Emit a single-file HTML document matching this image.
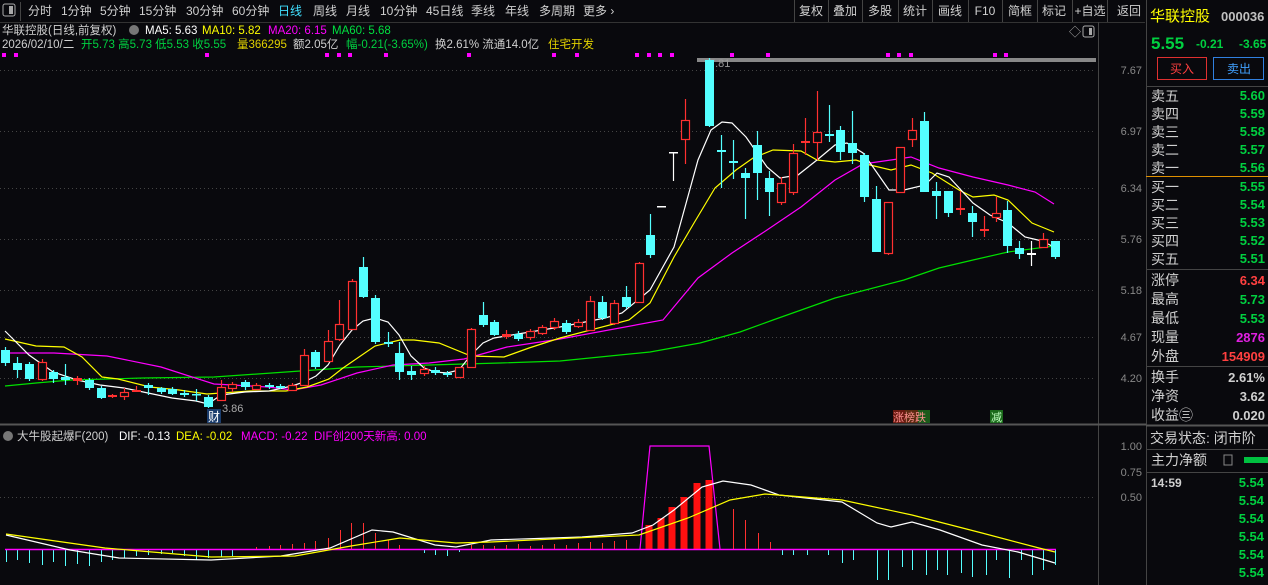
<!DOCTYPE html>
<html><head><meta charset="utf-8"><style>
html,body{margin:0;padding:0;background:#09090d;width:1268px;height:585px;overflow:hidden}
svg{display:block}
text{font-family:"Liberation Sans","Noto Sans CJK SC",sans-serif}
</style></head><body>
<svg id="s" width="1268" height="585" xmlns="http://www.w3.org/2000/svg">
<rect width="1268" height="585" fill="#09090d"/>
<!-- top nav -->
<line x1="0" y1="22.5" x2="1145" y2="22.5" stroke="#333"/>
<rect x="3" y="4" width="12" height="12" fill="none" stroke="#aaa" rx="2"/><rect x="9" y="6" width="4" height="8" fill="#aaa"/>
<line x1="20.5" y1="2" x2="20.5" y2="21" stroke="#444"/>
<g font-size="12" fill="#d0d0d0">
<text x="28" y="15">分时</text><text x="61" y="15">1分钟</text><text x="100" y="15">5分钟</text><text x="139" y="15">15分钟</text><text x="186" y="15">30分钟</text><text x="232" y="15">60分钟</text><text x="278" y="15" fill="#40e0ff">日线</text><text x="313" y="15">周线</text><text x="346" y="15">月线</text><text x="380" y="15">10分钟</text><text x="426" y="15">45日线</text><text x="471" y="15">季线</text><text x="505" y="15">年线</text><text x="539" y="15">多周期</text><text x="583" y="15">更多 ›</text>
</g>
<g stroke="#444"><line x1="794.5" y1="0" x2="794.5" y2="22"/><line x1="828.5" y1="0" x2="828.5" y2="22"/><line x1="862.5" y1="0" x2="862.5" y2="22"/><line x1="898.5" y1="0" x2="898.5" y2="22"/><line x1="932.5" y1="0" x2="932.5" y2="22"/><line x1="968.5" y1="0" x2="968.5" y2="22"/><line x1="1002.5" y1="0" x2="1002.5" y2="22"/><line x1="1037.5" y1="0" x2="1037.5" y2="22"/><line x1="1072.5" y1="0" x2="1072.5" y2="22"/><line x1="1107.5" y1="0" x2="1107.5" y2="22"/></g>
<g font-size="12" fill="#d0d0d0" text-anchor="middle">
<text x="811" y="15">复权</text><text x="845" y="15">叠加</text><text x="880" y="15">多股</text><text x="915" y="15">统计</text><text x="950" y="15">画线</text><text x="985" y="15">F10</text><text x="1020" y="15">简框</text><text x="1054" y="15">标记</text><text x="1090" y="15">+自选</text><text x="1129" y="15">返回</text>
</g>
<!-- info lines -->
<g font-size="11.5">
<text x="2" y="34" fill="#d0d0d0">华联控股(日线,前复权)</text>
<circle cx="134" cy="30" r="5" fill="#777"/>
<text x="145" y="34" fill="#fff">MA5: 5.63</text><text x="202" y="34" fill="#ffff00">MA10: 5.82</text><text x="268" y="34" fill="#ff00ff">MA20: 6.15</text><text x="332" y="34" fill="#00e040">MA60: 5.68</text>
<text x="2" y="48" fill="#d0d0d0">2026/02/10/二</text>
<text x="81" y="48" fill="#00d040">开5.73 高5.73 低5.53 收5.55</text>
<text x="237" y="48" fill="#e0d000">量366295</text>
<text x="293" y="48" fill="#d0d0d0">额2.05亿</text>
<text x="346" y="48" fill="#00d040">幅-0.21(-3.65%)</text>
<text x="435" y="48" fill="#d0d0d0">换2.61% 流通14.0亿</text>
<text x="548" y="48" fill="#e0d000">住宅开发</text>
</g>
<text x="1069" y="36" font-size="12" fill="#aaa">◇</text>
<rect x="1083" y="26" width="11" height="11" fill="none" stroke="#aaa" rx="2"/><rect x="1089" y="28" width="3" height="7" fill="#aaa"/>
<!-- borders -->
<line x1="1098.5" y1="22" x2="1098.5" y2="585" stroke="#444"/>
<line x1="1146.5" y1="0" x2="1146.5" y2="585" stroke="#444"/>
<line x1="0" y1="424.5" x2="1146" y2="424.5" stroke="#555" stroke-width="2"/>
<g id="grid" stroke="#444" stroke-dasharray="1,3"></g>
<g font-size="11" fill="#888" text-anchor="end">
<text x="1142" y="74">7.67</text><text x="1142" y="135">6.97</text><text x="1142" y="192">6.34</text><text x="1142" y="243">5.76</text><text x="1142" y="294">5.18</text><text x="1142" y="341">4.67</text><text x="1142" y="382">4.20</text>
<text x="1142" y="450">1.00</text><text x="1142" y="476">0.75</text><text x="1142" y="501">0.50</text>
</g>
<rect x="697" y="58" width="399" height="4" fill="#888"/>
<text x="709" y="67" font-size="11" fill="#999">7.81</text>
<g id="dots" fill="#ff00ff"></g>
<g id="lines" fill="none" stroke-width="1.2"></g>
<g id="candles"></g>
<text x="222" y="412" font-size="11" fill="#aaa">3.86</text>
<rect x="207" y="409" width="14" height="14" fill="#1a3c6c"/><text x="208" y="421" font-size="12" fill="#fff">财</text>
<rect x="893" y="410" width="12" height="13" fill="#6a1a10"/><rect x="905" y="410" width="13" height="13" fill="#5a2a10"/><rect x="918" y="410" width="12" height="13" fill="#1a5a1a"/>
<text x="893" y="421" font-size="11" fill="#ff9090">涨榜跌</text>
<rect x="990" y="410" width="13" height="13" fill="#1a6a1a"/><text x="991" y="421" font-size="11" fill="#c0ffc0">减</text>
<!-- lower panel -->
<circle cx="8" cy="436" r="5" fill="#777"/>
<g font-size="11.5">
<text x="17" y="440" fill="#d0d0d0">大牛股起爆F(200)</text><text x="119" y="440" fill="#fff">DIF: -0.13</text><text x="176" y="440" fill="#ffff00">DEA: -0.02</text><text x="241" y="440" fill="#ff00ff">MACD: -0.22</text><text x="314" y="440" fill="#ff00ff">DIF创200天新高: 0.00</text>
</g>
<line x1="0" y1="497.5" x2="1096" y2="497.5" stroke="#444" stroke-dasharray="1,3"/>
<g id="hist"></g>
<polyline points="640,549 650,446 709,446 720,549" fill="none" stroke="#ff00ff" stroke-width="1.2"/>
<line x1="5" y1="549.5" x2="1056" y2="549.5" stroke="#ff00ff" stroke-width="1.5"/>
<g id="macd" fill="none" stroke-width="1.2"></g>
<!-- right panel -->
<text x="1150" y="21" font-size="15" fill="#ffff00">华联控股</text>
<text x="1221" y="21" font-size="13" fill="#c0c0c0" font-weight="bold">000036</text>
<text x="1151" y="49" font-size="17" font-weight="bold" fill="#00d040">5.55</text>
<text x="1196" y="48" font-size="12" font-weight="bold" fill="#00d040">-0.21</text>
<text x="1239" y="48" font-size="12" font-weight="bold" fill="#00d040">-3.65</text>
<rect x="1157.5" y="57.5" width="49" height="22" fill="none" stroke="#e03030"/>
<text x="1182" y="73" font-size="12" fill="#ff4040" text-anchor="middle">买入</text>
<rect x="1213.5" y="57.5" width="50" height="22" fill="none" stroke="#3080e0"/>
<text x="1239" y="73" font-size="12" fill="#40a0ff" text-anchor="middle">卖出</text>
<line x1="1146" y1="86.5" x2="1268" y2="86.5" stroke="#444"/>
<line x1="1146" y1="176.5" x2="1268" y2="176.5" stroke="#e09000"/>
<line x1="1146" y1="269.5" x2="1268" y2="269.5" stroke="#444"/>
<line x1="1146" y1="366.5" x2="1268" y2="366.5" stroke="#444"/>
<line x1="1146" y1="425.5" x2="1268" y2="425.5" stroke="#555" stroke-width="2"/>
<line x1="1146" y1="449.5" x2="1268" y2="449.5" stroke="#444"/>
<line x1="1146" y1="472.5" x2="1268" y2="472.5" stroke="#444"/>
<g font-size="14" fill="#d0d0d0">
<text x="1151" y="101">卖五</text><text x="1151" y="119">卖四</text><text x="1151" y="137">卖三</text><text x="1151" y="155">卖二</text><text x="1151" y="173">卖一</text>
<text x="1151" y="192">买一</text><text x="1151" y="210">买二</text><text x="1151" y="228">买三</text><text x="1151" y="246">买四</text><text x="1151" y="264">买五</text>
<text x="1151" y="285">涨停</text><text x="1151" y="304">最高</text><text x="1151" y="323">最低</text><text x="1151" y="342">现量</text><text x="1151" y="361">外盘</text>
<text x="1151" y="382">换手</text><text x="1151" y="401">净资</text><text x="1151" y="420">收益㊂</text>
<text x="1150" y="443">交易状态: 闭市阶</text><text x="1151" y="465">主力净额</text>
</g>
<rect x="1224" y="455" width="8" height="10" fill="none" stroke="#888"/>
<rect x="1244" y="457" width="24" height="6" fill="#00c040"/>
<g font-size="13" font-weight="bold" fill="#00d040" text-anchor="end">
<text x="1265" y="100">5.60</text><text x="1265" y="118">5.59</text><text x="1265" y="136">5.58</text><text x="1265" y="154">5.57</text><text x="1265" y="172">5.56</text>
<text x="1265" y="191">5.55</text><text x="1265" y="209">5.54</text><text x="1265" y="227">5.53</text><text x="1265" y="245">5.52</text><text x="1265" y="263">5.51</text>
<text x="1265" y="285" fill="#ff4040">6.34</text><text x="1265" y="304">5.73</text><text x="1265" y="323">5.53</text><text x="1265" y="342" fill="#e020e0">2876</text><text x="1265" y="361" fill="#ff4040">154909</text>
<text x="1265" y="382" fill="#d0d0d0">2.61%</text><text x="1265" y="401" fill="#d0d0d0">3.62</text><text x="1265" y="420" fill="#d0d0d0">0.020</text>
<text x="1264" y="487">5.54</text><text x="1264" y="505">5.54</text><text x="1264" y="523">5.54</text><text x="1264" y="541">5.54</text><text x="1264" y="559">5.54</text><text x="1264" y="577">5.54</text>
</g>
<text x="1151" y="487" font-size="12" font-weight="bold" fill="#d0d0d0">14:59</text>
</svg>
<script>
var NS="http://www.w3.org/2000/svg";
function el(p,t,a){var e=document.createElementNS(NS,t);for(var k in a)e.setAttribute(k,a[k]);document.getElementById(p).appendChild(e);return e;}
[70,131,188,239,290,337,378].forEach(function(y){el('grid','line',{x1:0,y1:y+.5,x2:1096,y2:y+.5});});
[4,16,207,327,339,350,386,469,554,577,637,649,660,672,732,768,888,899,911,995,1006].forEach(function(x){el('dots','rect',{x:x-2,y:53,width:4,height:4});});
function pl(p,c,pts){el(p,'polyline',{points:pts,stroke:c});}
pl('lines','#00e000',"5,386 36,383 71,380 143,378 214,377 286,372 357,367 429,365 500,363 560,361 650,352 700,343 740,332 773,320 835,298 904,280 939,268 973,260 1008,252 1054,246");
pl('lines','#ff00ff',"5,353 54,353 107,356 161,367 214,384 268,387 293,390 321,385 357,373 393,365 429,363 464,359 507,347 560,339 663,320 698,278 732,253 767,230 801,207 835,180 863,164 891,160 911,157 939,168 973,177 1008,185 1035,192 1054,204");
pl('lines','#ffff00',"5,339 36,346 64,347 82,357 102,377 118,379 150,387 179,390 207,394 250,391 286,391 307,387 329,379 343,368 375,346 400,340 414,340 439,343 471,356 504,357 529,348 560,338 629,320 650,303 674,257 694,223 715,188 736,170 753,158 773,150 801,151 817,160 835,162 856,160 870,165 891,170 911,165 932,173 959,190 973,197 994,195 1008,200 1032,223 1054,232");
pl('lines','#ffffff',"5,331 29,355 53,372 77,380 100,385 124,388 148,393 172,398 196,401 208,404 221,395 245,392 269,391 292,386 304,382 316,376 328,365 340,345 352,330 363,321 375,318 388,322 399,335 411,356 424,368 435,372 447,373 459,370 471,355 483,343 494,338 506,336 530,332 560,327 605,318 622,313 650,290 674,247 698,160 711,130 722,122 732,123 746,137 767,167 780,178 798,175 817,160 835,145 847,143 863,153 873,167 889,190 904,190 925,185 937,173 949,177 973,203 990,215 1008,223 1025,237 1042,241 1056,248");
var C=[[5,350,363,347,366,'c'],[17,363,370,357,378,'c'],[29,364,379,362,381,'c'],[42,362,379,359,381,'r'],[53,372,379,370,383,'c'],[65,377,380,364,385,'c'],[77,378,381,376,385,'r'],[89,380,388,378,390,'c'],[101,388,398,386,399,'c'],[112,395,397,394,398,'r'],[124,392,396,388,400,'r'],[136,390,392,386,392,'r'],[148,385,388,383,395,'c'],[161,388,392,387,394,'c'],[172,389,394,387,395,'c'],[184,393,395,390,397,'c'],[196,394,395,389,401,'c'],[208,397,407,395,408,'c'],[221,387,400,380,400,'r'],[232,384,388,382,392,'r'],[245,382,387,380,390,'c'],[256,385,389,383,390,'r'],[269,385,387,383,389,'c'],[280,386,388,384,389,'c'],[292,385,390,383,391,'r'],[304,355,385,349,386,'r'],[315,352,367,350,369,'c'],[328,341,361,330,362,'r'],[339,324,339,300,341,'r'],[352,281,329,279,330,'r'],[363,267,297,257,298,'c'],[375,298,342,295,344,'c'],[388,342,344,332,347,'c'],[399,353,372,342,380,'c'],[411,371,375,366,380,'c'],[424,369,373,366,376,'r'],[435,370,373,367,375,'c'],[447,373,375,371,377,'c'],[459,367,377,367,378,'r'],[471,329,367,328,368,'r'],[483,315,325,302,327,'c'],[494,322,335,320,336,'c'],[506,334,337,330,339,'r'],[518,334,339,331,341,'c'],[530,331,337,329,340,'r'],[542,327,333,325,335,'r'],[554,321,327,318,330,'r'],[566,323,332,320,334,'c'],[578,322,326,319,328,'r'],[590,301,330,296,331,'r'],[602,302,318,296,320,'c'],[614,303,323,300,325,'r'],[626,297,307,286,309,'c'],[639,263,302,262,303,'r'],[650,235,255,214,258,'c'],[661,206,207,206,207,'w'],[673,152,153,152,181,'w'],[685,120,139,99,164,'r'],[709,60,126,58,127,'c'],[721,150,152,135,188,'c'],[733,161,163,140,179,'c'],[745,173,178,168,219,'c'],[757,145,173,131,200,'c'],[769,178,192,171,216,'c'],[781,183,202,177,205,'r'],[793,153,192,144,195,'r'],[805,141,143,118,155,'r'],[817,132,142,91,160,'r'],[829,134,136,105,142,'c'],[840,130,152,126,160,'c'],[852,143,153,111,164,'c'],[864,155,197,153,202,'c'],[876,199,252,186,252,'c'],[888,202,253,202,255,'r'],[900,147,192,147,192,'r'],[912,130,139,118,147,'r'],[924,121,192,112,192,'c'],[936,191,196,182,219,'c'],[948,191,213,191,217,'c'],[960,208,210,191,215,'r'],[972,213,222,206,237,'c'],[984,229,231,216,237,'r'],[996,213,217,197,222,'r'],[1007,210,246,201,253,'c'],[1019,248,254,241,259,'c'],[1031,253,255,241,266,'w'],[1043,239,247,233,247,'r'],[1055,241,257,241,259,'c']];
var col={c:'#54ffff',r:'#ff3030',w:'#ffffff'};
C.forEach(function(d){var x=d[0],c=col[d[5]];
 el('candles','line',{x1:x+.5,y1:d[3],x2:x+.5,y2:d[4],stroke:c,'stroke-width':1.2});
 var h=d[2]-d[1];
 if(d[5]=='r'&&h>3){el('candles','rect',{x:x-3.5,y:d[1]+.5,width:8,height:h,fill:'#09090d',stroke:c,'stroke-width':1.2});}
 else{el('candles','rect',{x:x-4,y:d[1],width:9,height:Math.max(h,1.5),fill:c});}
});
var H=[[6,562],[17,560],[29,563],[42,565],[53,562],[65,566],[77,564],[89,566],[101,562],[112,560],[124,558],[136,556],[148,555],[161,554],[172,553],[184,556],[196,560],[208,558],[221,557],[232,556],[256,547],[269,546],[280,545],[292,544],[304,543],[315,541],[328,538],[340,530],[351,523],[363,523],[375,533],[388,540],[399,545],[424,553],[435,555],[447,556],[459,552],[471,545],[483,545],[494,546],[506,545],[518,544],[530,546],[542,545],[554,544],[566,545],[578,543],[590,542],[602,543],[614,541],[626,540],[733,509],[745,520],[758,533],[770,542],[782,555],[793,555],[807,555],[818,550],[828,555],[842,563],[853,560],[877,580],[888,580],[902,567],[912,570],[926,575],[937,570],[947,575],[961,573],[972,577],[986,575],[996,560],[1009,578],[1021,560],[1032,575],[1043,570],[1055,565]];
H.forEach(function(h){var c=h[1]<549?'#ff3030':'#54ffff';el('hist','line',{x1:h[0]+.5,y1:549,x2:h[0]+.5,y2:h[1],stroke:c,'stroke-width':1});});
[[649,525],[661,518],[672,507],[684,497],[697,483],[709,480]].forEach(function(b){el('hist','rect',{x:b[0]-3.5,y:b[1],width:7,height:549-b[1],fill:'#ff1010'});});
pl('macd','#ffffff',"6,535 70,550 119,558 211,560 281,556 330,548 372,530 393,532 435,545 456,547 491,540 582,537 632,533 653,525 674,510 702,487 723,481 751,485 779,495 842,502 877,523 891,527 912,522 940,530 982,545 1018,552 1055,563");
pl('macd','#ffff00',"6,534 105,548 211,557 295,556 351,546 400,538 456,543 491,542 639,535 688,518 730,500 765,494 842,500 912,515 982,533 1039,548 1055,552");
</script>
</body></html>
